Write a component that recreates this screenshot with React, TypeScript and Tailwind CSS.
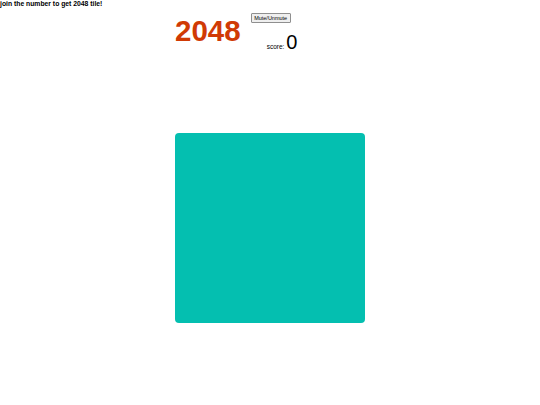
export default function App() {
  return (
    <div className="min-h-[405px] bg-white font-['Liberation_Sans',Arial,sans-serif] text-black">
      <h1 className="text-[6.8px] font-bold leading-[8px] text-black">join the number to get 2048 tile!</h1>

      <div className="mx-auto w-[190px]">
        <div className="flex items-start">
          <div className="mt-[6px] text-[29.5px] font-bold leading-[34px] text-[#d03a05]">2048</div>
          <div className="ml-[10px] mt-[5px] flex flex-col items-start">
            <button className="h-[10px] w-[40px] rounded-[1px] border border-[#8f8f8f] bg-[#efefef] px-0 text-[5.5px] leading-[8px]">
              Mute/Unmute
            </button>
            <div className="ml-[16px] mt-[9px] flex items-baseline gap-[2px]">
              <span className="text-[6.5px]">score:</span>
              <span className="text-[20px] leading-[20px]">0</span>
            </div>
          </div>
        </div>

        <div className="mt-[81px] h-[190px] w-[190px] rounded-[4px] bg-[#04bfb0]"></div>
      </div>
    </div>
  );
}
